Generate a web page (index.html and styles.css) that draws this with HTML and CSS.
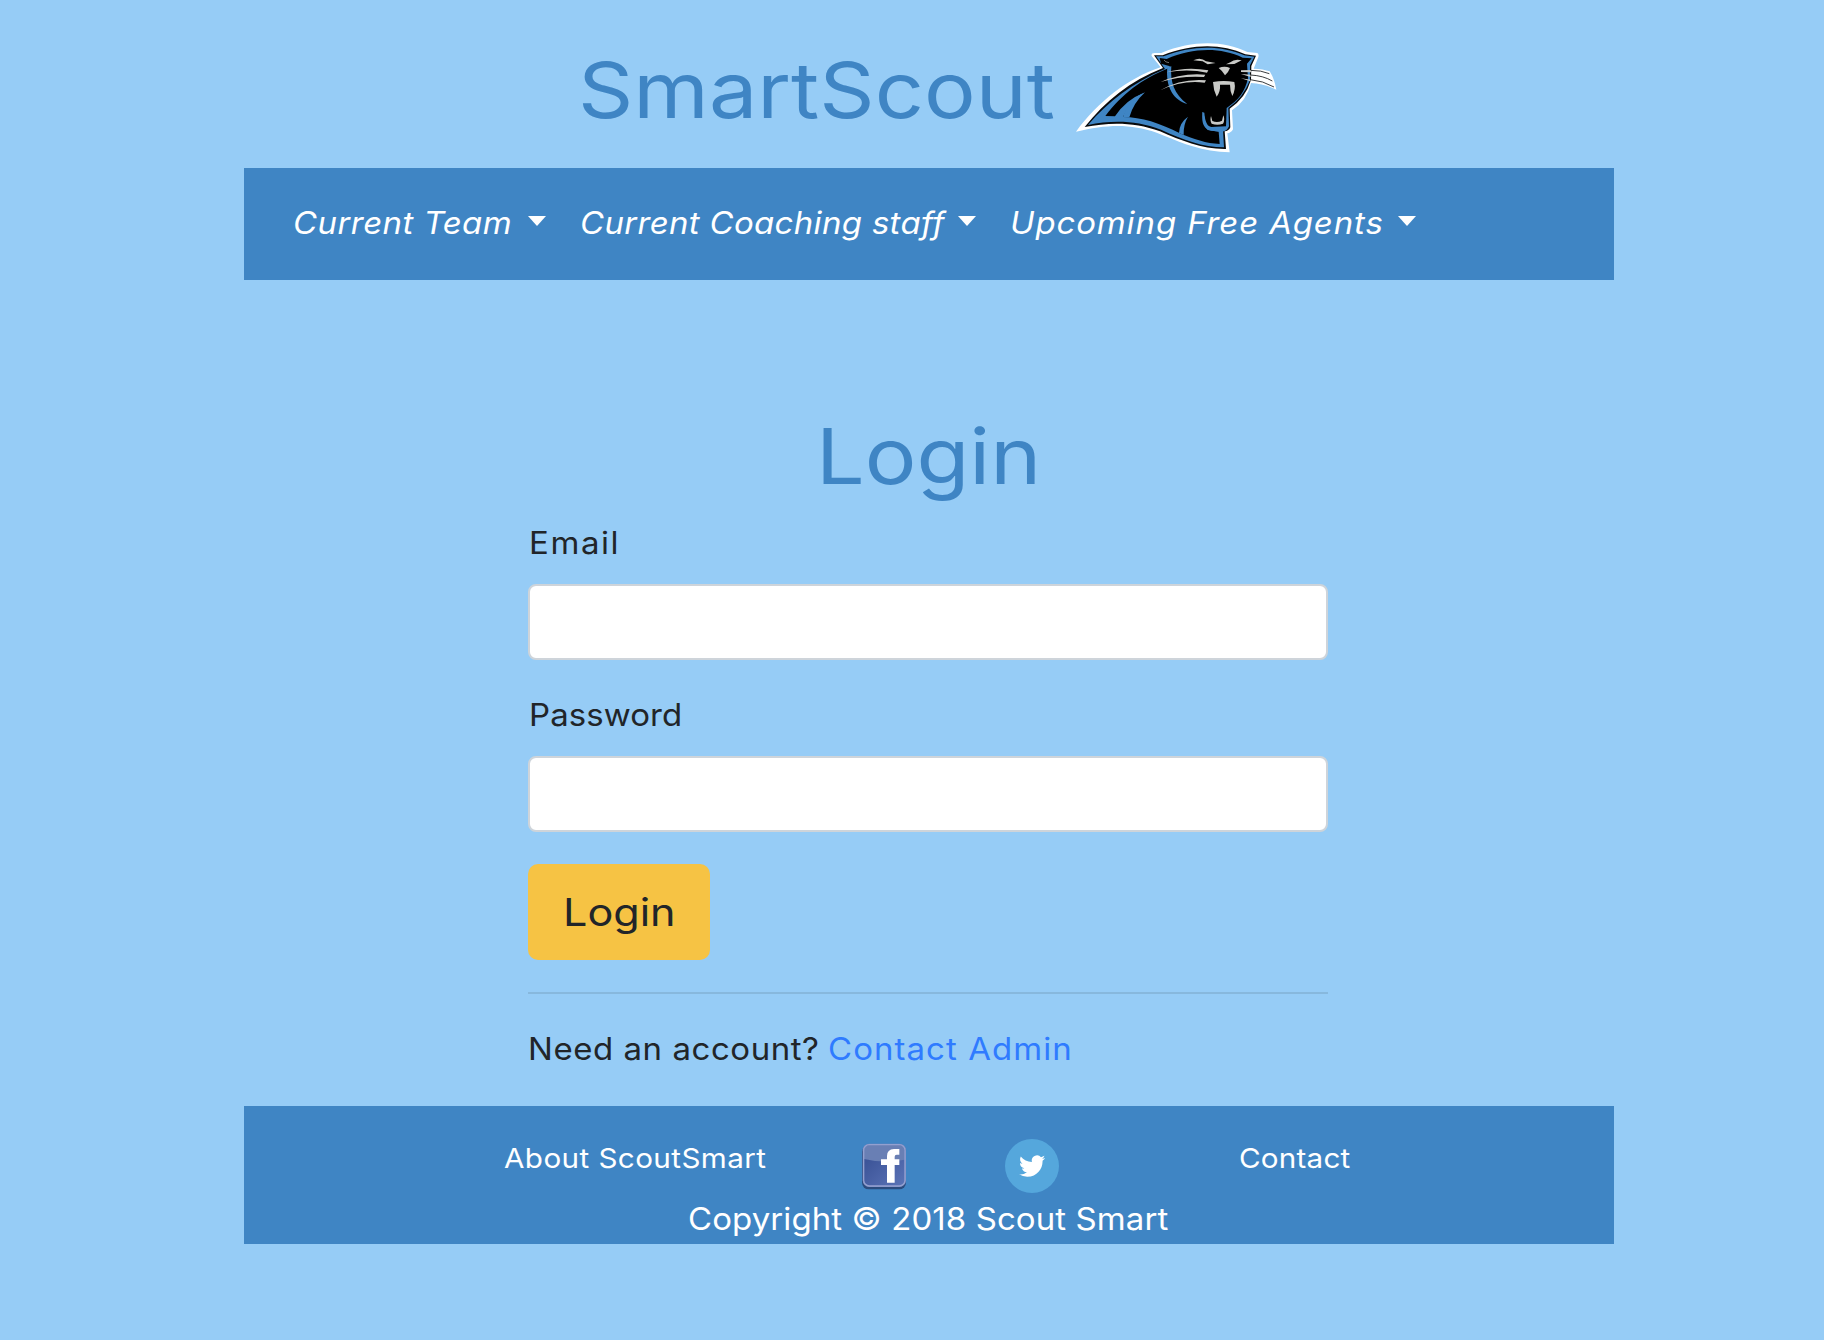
FILE: index.html
```html
<!DOCTYPE html>
<html lang="en">
<head>
<meta charset="utf-8">
<title>SmartScout</title>
<link rel="stylesheet" href="styles.css">
</head>
<body>
<header class="masthead">
  <div class="brand"><span class="wide-lg">SmartScout</span></div>
  <svg class="logo" viewBox="48 39 603 330" aria-label="Panther logo">
    <path fill="#fff" d="M48 305C115 216 200 146 302 112L275 78Q273 69 284 69L304 69C400 30 490 32 562 66L592 69Q599 74 593 86L581 116Q610 117 629 124Q643 146 649 179Q612 161 573 159Q560 213 516 241L519 298Q513 309 502 310L509 367L480 365C400 357 350 331 290 308C210 280 140 283 48 305Z"/>
    <path fill="#080a0c" d="M74 291C135 215 210 152 309 114L282 76L308 76C400 40 485 41 556 73L588 77L574 108L573 150Q556 205 509 236L511 292Q507 303 494 304L498 357C425 358 365 332 300 304C225 276 150 276 74 291Z"/>
    <path fill="#3f85c4" d="M84 285C145 214 218 158 315 117L288 79L311 79C400 45 482 46 553 76L583 80L570 106L570 150Q550 203 505 234L507 289Q503 298 489 300L492 352C428 352 370 329 303 299C226 270 155 271 84 285Z"/>
    <path fill="#000" d="M136 258C190 190 240 150 325 115L330 109L303 101L299 84L320 87C400 52 482 52 548 83L575 85L561 101L564 145C555 185 537 209 500 234L498 290L455 291Q436 290 433 248L427 246Q427 287 443 300L476 305L479 342C440 340 400 328 358 309Q362 280 383 262Q370 280 371 315L358 309C300 280 245 261 189 261Q207 211 253 188Q198 208 165 259Z"/>
    <path fill="#3f85c4" d="M322 112L334 109C330 155 342 193 382 222C342 211 316 174 322 112ZM357 309Q358 278 384 260Q370 283 371 315ZM189 262Q202 208 255 187Q220 219 208 262Z"/>
    <path fill="#3f85c4" d="M428 246Q435 260 436 278Q440 291 454 291L506 289Q503 304 486 305L454 302Q421 297 428 246Z"/>
    <g fill="#c9cac7">
      <path d="M320 127Q380 109 445 121L441 128Q385 116 320 127ZM302 156Q365 128 436 134L432 141Q365 136 302 156ZM301 181Q362 145 438 151L434 158Q368 149 301 181Z"/>
      <path d="M400 91Q422 80 438 94L467 99L443 103L428 94ZM545 91Q523 86 511 97L498 103L523 102Z"/>
      <path d="M476 114Q494 107 510 114Q506 126 495 136Q488 123 476 114Z"/>
      <path d="M459 156Q491 150 523 156Q528 177 517 198Q510 184 510 164L480 164Q482 184 470 200Q460 180 459 156Z"/>
      <path d="M453 258L457 273Q472 279 486 272L490 256Q496 269 489 281Q472 287 455 281Q449 272 453 258Z"/>
      <path d="M543 121L573 120L573 127L543 126ZM543 132L572 134L572 141ZM543 145L572 149L571 154Z"/>
    </g>
    <path fill="none" stroke="#080a0c" stroke-width="2.4" d="M572 121Q604 121 628 131M572 135Q610 137 637 153M571 149Q609 152 642 171"/>
    <path fill="none" stroke="#a6a8a8" stroke-width="2" d="M312 90Q316 97 327 98"/>
  </svg>
</header>
<nav class="nav">
  <a class="nav-item team" href="#"><span class="wide">Current Team</span><i class="caret"></i></a>
  <a class="nav-item staff" href="#"><span class="wide">Current Coaching staff</span><i class="caret"></i></a>
  <a class="nav-item agents" href="#"><span class="wide">Upcoming Free Agents</span><i class="caret"></i></a>
</nav>
<main class="login">
  <h1><span class="wide-lg">Login</span></h1>
  <form>
    <label class="l-email" for="email"><span class="wide">Email</span></label>
    <input id="email" type="email">
    <label class="l-password" for="password"><span class="wide">Password</span></label>
    <input id="password" type="password">
    <button type="button"><span class="wide-lg">Login</span></button>
  </form>
  <hr>
  <p class="signup"><span class="wide question">Need an account?</span><a class="wide admin" href="#">Contact Admin</a></p>
</main>
<footer class="footer">
  <div class="footer-row">
    <a class="about" href="#"><span class="wide">About ScoutSmart</span></a>
    <svg class="facebook" viewBox="0 0 141 141">
      <defs>
        <linearGradient id="fb" x1="0" y1="0" x2="1" y2="1"><stop offset="0" stop-color="#344b90"/><stop offset="1" stop-color="#5b74b7"/></linearGradient>
      </defs>
      <rect x="3" y="7" width="132" height="132" rx="20" fill="#2b4c7e"/>
      <rect x="5" y="2" width="130" height="130" rx="20" fill="#7583bd"/>
      <rect x="9" y="6" width="122" height="122" rx="16" fill="url(#fb)"/>
      <path d="M9 22Q9 6 25 6H115Q131 6 131 22V50Q70 62 9 48Z" fill="#697fb4"/>
      <rect x="8" y="5" width="124" height="124" rx="17" fill="none" stroke="#93a0cf" stroke-width="4"/>
      <path d="M78 119V66H60V49H78V39Q78 19 99 18H115V35H107Q101 35 101 41V49H115V66H101V119Z" fill="#fff"/>
    </svg>
    <svg class="twitter" viewBox="0 0 162 162">
      <circle cx="81" cy="81" r="81" fill="#55a7dc"/>
      <path transform="translate(42 42) scale(3.28)" fill="#fff" d="M23.95 4.57a10 10 0 0 1-2.82.77 4.96 4.96 0 0 0 2.16-2.72c-.95.55-2 .95-3.13 1.18a4.92 4.92 0 0 0-8.38 4.48C7.69 8.1 4.07 6.13 1.64 3.16a4.93 4.93 0 0 0 1.52 6.57 4.9 4.9 0 0 1-2.23-.61v.06a4.92 4.92 0 0 0 3.95 4.83 5 5 0 0 1-2.21.08 4.94 4.94 0 0 0 4.6 3.42A9.87 9.87 0 0 1 0 19.54a14 14 0 0 0 7.55 2.21c9.05 0 14-7.5 14-13.98 0-.21 0-.42-.02-.63a9.94 9.94 0 0 0 2.42-2.57z"/>
    </svg>
    <a class="contact" href="#"><span class="wide">Contact</span></a>
  </div>
  <p class="copyright"><span class="wide">Copyright © 2018 Scout Smart</span></p>
</footer>
</body>
</html>
```
FILE: styles.css
```css
* { box-sizing: border-box; }

body {
  margin: 0;
  padding: 0 210px 0 244px;
  min-height: 1340px;
  background: #96ccf6;
  color: #212529;
  font-family: Inter, "Open Sans", sans-serif;
  font-size: 30.8px;
  line-height: 48px;
}

a { color: inherit; text-decoration: none; }
p, h1 { margin: 0; }

/* Widened letterforms for the geometric look of the brand type */
.wide, .wide-lg {
  display: inline-block;
  white-space: nowrap;
  transform-origin: left center;
}
.wide { transform: scaleX(1.07); }
.wide-lg { transform: scaleX(1.12); }

.masthead {
  display: flex;
  height: 168px;
  padding: 40px 0 0 334px;
  color: #3f85c4;
}
.brand {
  width: 498px;
  font-size: 77px;
  line-height: 100px;
}
.logo { width: 201px; height: 110px; margin-top: 3px; }

.nav {
  display: flex;
  height: 112px;
  padding: 31px 0 0 49px;
  background: #3f85c4;
  color: #fff;
  font-style: italic;
}
.nav-item { display: flex; justify-content: space-between; height: 48px; }
.team { width: 253px; margin-right: 34px; letter-spacing: .42px; }
.staff { width: 396px; margin-right: 34px; letter-spacing: .31px; }
.agents { width: 406px; letter-spacing: .83px; }
.caret {
  width: 18px;
  height: 10px;
  margin-top: 17px;
  background: #fff;
  clip-path: polygon(0 0, 100% 0, 50% 100%);
}

.login { width: 800px; margin-left: 284px; padding-top: 128px; }
h1 {
  padding-left: 288px;
  font-size: 77px;
  line-height: 96px;
  font-weight: 400;
  color: #3f85c4;
}
form { padding-top: 15px; }
label { display: block; height: 48px; margin-bottom: 17px; padding-left: .5px; }
.l-email { letter-spacing: 1.5px; }
.l-password { letter-spacing: .1px; }
input {
  display: block;
  width: 100%;
  height: 76px;
  margin: 0 0 31px;
  padding: 12px 24px;
  border: 2px solid #ced4da;
  border-radius: 8px;
  background: #fff;
  font: inherit;
}
button {
  display: block;
  width: 182px;
  height: 96px;
  margin-top: 32px;
  padding: 0 0 0 34.6px;
  border: 0;
  border-radius: 10px;
  background: #f6c344;
  color: #212529;
  font: inherit;
  font-size: 38.5px;
  text-align: left;
}
hr { height: 2px; margin: 32px 0 31px; border: 0; background: #87b8dd; }
.signup { display: flex; height: 81px; }
.question { width: 300px; letter-spacing: .53px; }
.admin { color: #2f7bff; letter-spacing: 1px; }

.footer { height: 138px; background: #3f85c4; color: #fff; }
.footer-row {
  display: flex;
  height: 89px;
  padding-left: 260px;
  font-size: 27.7px;
}
.about { width: 357px; padding-top: 28px; letter-spacing: .39px; }
.facebook { width: 47px; height: 47px; margin-top: 36.5px; }
.twitter { width: 54px; height: 54px; margin: 33px 0 0 97px; }
.contact { margin-left: 180px; padding-top: 28px; letter-spacing: .2px; }
.copyright { padding-left: 443.5px; letter-spacing: .1px; }
```
